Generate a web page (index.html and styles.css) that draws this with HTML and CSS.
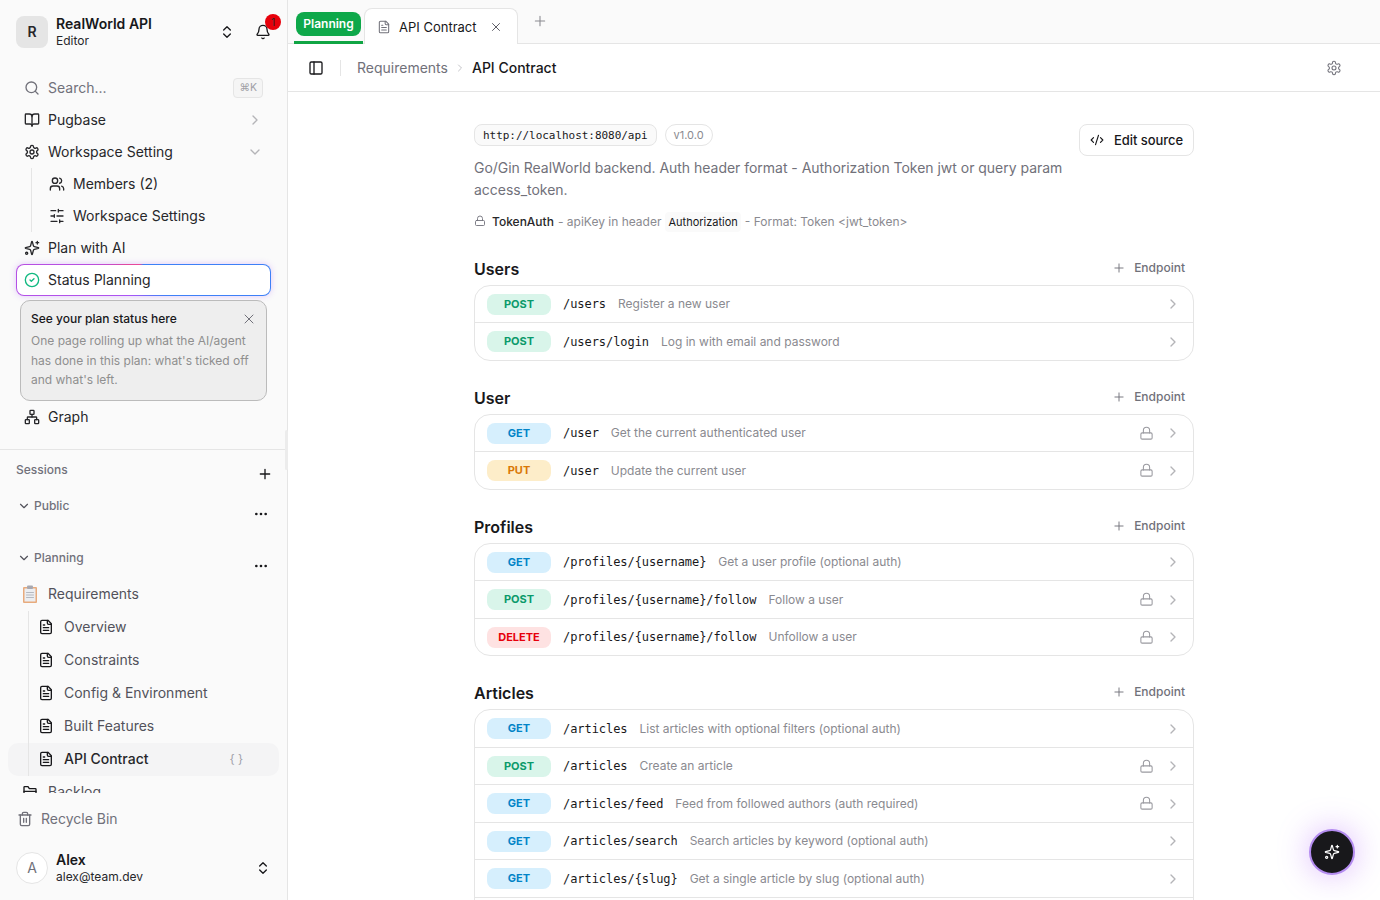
FILE: index.html
```html
<!DOCTYPE html>
<html lang="en">
<head>
<meta charset="utf-8">
<title>API Contract</title>
<link rel="stylesheet" href="styles.css">
</head>
<body>

<!-- icon sprite -->
<svg class="sprite" xmlns="http://www.w3.org/2000/svg">
    <symbol id="i-updown" viewBox="0 0 24 24"><path d="m7 15 5 5 5-5"/><path d="m7 9 5-5 5 5"/></symbol>
    <symbol id="i-bell" viewBox="0 0 24 24"><path d="M10.268 21a2 2 0 0 0 3.464 0"/><path d="M3.262 15.326A1 1 0 0 0 4 17h16a1 1 0 0 0 .74-1.673C19.41 13.956 18 12.499 18 8A6 6 0 0 0 6 8c0 4.499-1.411 5.956-2.738 7.326"/></symbol>
    <symbol id="i-search" viewBox="0 0 24 24"><circle cx="11" cy="11" r="8"/><path d="m21 21-4.3-4.3"/></symbol>
    <symbol id="i-book" viewBox="0 0 24 24"><path d="M12 7v14"/><path d="M3 18a1 1 0 0 1-1-1V4a1 1 0 0 1 1-1h5a4 4 0 0 1 4 4 4 4 0 0 1 4-4h5a1 1 0 0 1 1 1v13a1 1 0 0 1-1 1h-6a3 3 0 0 0-3 3 3 3 0 0 0-3-3z"/></symbol>
    <symbol id="i-gear" viewBox="0 0 24 24"><path d="M12.22 2h-.44a2 2 0 0 0-2 2v.18a2 2 0 0 1-1 1.73l-.43.25a2 2 0 0 1-2 0l-.15-.08a2 2 0 0 0-2.73.73l-.22.38a2 2 0 0 0 .73 2.73l.15.1a2 2 0 0 1 1 1.72v.51a2 2 0 0 1-1 1.74l-.15.09a2 2 0 0 0-.73 2.73l.22.38a2 2 0 0 0 2.73.73l.15-.08a2 2 0 0 1 2 0l.43.25a2 2 0 0 1 1 1.73V20a2 2 0 0 0 2 2h.44a2 2 0 0 0 2-2v-.18a2 2 0 0 1 1-1.73l.43-.25a2 2 0 0 1 2 0l.15.08a2 2 0 0 0 2.73-.73l.22-.39a2 2 0 0 0-.73-2.73l-.15-.08a2 2 0 0 1-1-1.74v-.5a2 2 0 0 1 1-1.74l.15-.09a2 2 0 0 0 .73-2.73l-.22-.38a2 2 0 0 0-2.73-.73l-.15.08a2 2 0 0 1-2 0l-.43-.25a2 2 0 0 1-1-1.73V4a2 2 0 0 0-2-2z"/><circle cx="12" cy="12" r="3"/></symbol>
    <symbol id="i-users" viewBox="0 0 24 24"><path d="M16 21v-2a4 4 0 0 0-4-4H6a4 4 0 0 0-4 4v2"/><circle cx="9" cy="7" r="4"/><path d="M22 21v-2a4 4 0 0 0-3-3.87"/><path d="M16 3.13a4 4 0 0 1 0 7.75"/></symbol>
    <symbol id="i-sliders" viewBox="0 0 24 24"><path d="M21 4h-7M10 4H3M21 12h-9M8 12H3M21 20h-5M12 20H3M14 2v4M8 10v4M16 18v4"/></symbol>
    <symbol id="i-sparkle" viewBox="0 0 24 24"><path d="M9.937 15.5A2 2 0 0 0 8.5 14.063l-6.135-1.582a.5.5 0 0 1 0-.962L8.5 9.936A2 2 0 0 0 9.937 8.5l1.582-6.135a.5.5 0 0 1 .963 0L14.063 8.5A2 2 0 0 0 15.5 9.937l6.135 1.581a.5.5 0 0 1 0 .964L15.5 14.063a2 2 0 0 0-1.437 1.437l-1.582 6.135a.5.5 0 0 1-.963 0z"/><path d="M20 2v4M22 4h-4"/><circle cx="4" cy="20" r="1.6"/></symbol>
    <symbol id="i-check" viewBox="0 0 24 24"><circle cx="12" cy="12" r="10"/><path d="m9 12 2 2 4-4"/></symbol>
    <symbol id="i-graph" viewBox="0 0 24 24"><rect x="16" y="16" width="6" height="6" rx="1"/><rect x="2" y="16" width="6" height="6" rx="1"/><rect x="9" y="2" width="6" height="6" rx="1"/><path d="M5 16v-3a1 1 0 0 1 1-1h12a1 1 0 0 1 1 1v3"/><path d="M12 12V8"/></symbol>
    <symbol id="i-file" viewBox="0 0 24 24"><path d="M15 2H6a2 2 0 0 0-2 2v16a2 2 0 0 0 2 2h12a2 2 0 0 0 2-2V7Z"/><path d="M14 2v4a2 2 0 0 0 2 2h4"/><path d="M10 9H8M16 13H8M16 17H8"/></symbol>
    <symbol id="i-trash" viewBox="0 0 24 24"><path d="M3 6h18"/><path d="M19 6v14c0 1-1 2-2 2H7c-1 0-2-1-2-2V6"/><path d="M8 6V4c0-1 1-2 2-2h4c1 0 2 1 2 2v2"/><path d="M10 11v6M14 11v6"/></symbol>
    <symbol id="i-folder" viewBox="0 0 24 24"><path d="M3 20V5a1 1 0 0 1 1-1h5l2 3h9a1 1 0 0 1 1 1v12"/><path d="M3 11h18"/></symbol>
    <symbol id="i-panel" viewBox="0 0 24 24"><rect x="3" y="3" width="18" height="18" rx="2"/><path d="M9 3v18"/></symbol>
    <symbol id="i-lock" viewBox="0 0 24 24"><rect x="3" y="11" width="18" height="10" rx="2"/><path d="M7 11V7a5 5 0 0 1 10 0v4"/></symbol>
    <symbol id="i-code" viewBox="0 0 24 24"><path d="m18 16 4-4-4-4"/><path d="m6 8-4 4 4 4"/><path d="m14.5 4-5 16"/></symbol>
    <symbol id="i-plus" viewBox="0 0 24 24"><path d="M5 12h14M12 5v14"/></symbol>
    <symbol id="i-x" viewBox="0 0 24 24"><path d="M18 6 6 18M6 6l12 12"/></symbol>
    <symbol id="i-right" viewBox="0 0 24 24"><path d="m9 18 6-6-6-6"/></symbol>
    <symbol id="i-down" viewBox="0 0 24 24"><path d="m6 9 6 6 6-6"/></symbol>
    <symbol id="i-dots" viewBox="0 0 24 24"><circle cx="5" cy="12" r="1"/><circle cx="12" cy="12" r="1"/><circle cx="19" cy="12" r="1"/></symbol>
</svg>

<div class="app">

    <aside class="sidebar">
        <div class="workspace">
            <div class="avatar avatar-square">R</div>
            <div class="who">
                <div class="who-name">RealWorld API</div>
                <div class="who-sub">Editor</div>
            </div>
            <svg class="ic ic-dark"><use href="#i-updown"/></svg>
            <div class="bell">
                <svg class="ic ic-dark ic-bell"><use href="#i-bell"/></svg>
                <span class="bell-badge">1</span>
            </div>
        </div>

        <nav class="nav">
            <div class="nav-item nav-search">
                <svg class="ic ic-gray"><use href="#i-search"/></svg>
                <span class="nav-label">Search...</span>
                <kbd class="kbd">⌘K</kbd>
            </div>
            <div class="nav-item">
                <svg class="ic"><use href="#i-book"/></svg>
                <span class="nav-label">Pugbase</span>
                <svg class="ic ic-light"><use href="#i-right"/></svg>
            </div>
            <div class="nav-item">
                <svg class="ic"><use href="#i-gear"/></svg>
                <span class="nav-label">Workspace Setting</span>
                <svg class="ic ic-light"><use href="#i-down"/></svg>
            </div>
            <div class="nav-sub">
                <div class="nav-item">
                    <svg class="ic"><use href="#i-users"/></svg>
                    <span class="nav-label">Members (2)</span>
                </div>
                <div class="nav-item">
                    <svg class="ic"><use href="#i-sliders"/></svg>
                    <span class="nav-label">Workspace Settings</span>
                </div>
            </div>
            <div class="nav-item">
                <svg class="ic"><use href="#i-sparkle"/></svg>
                <span class="nav-label">Plan with AI</span>
            </div>
            <div class="nav-item nav-status">
                <svg class="ic ic-green"><use href="#i-check"/></svg>
                <span class="nav-label">Status Planning</span>
            </div>
            <div class="hint">
                <div class="hint-head">
                    <span>See your plan status here</span>
                    <svg class="ic ic-hint"><use href="#i-x"/></svg>
                </div>
                <p>One page rolling up what the AI/agent has done in this plan: what's ticked off and what's left.</p>
            </div>
            <div class="nav-item">
                <svg class="ic"><use href="#i-graph"/></svg>
                <span class="nav-label">Graph</span>
            </div>
        </nav>

        <div class="sessions">
            <div class="sess-head">
                <span class="sess-title">Sessions</span>
                <svg class="ic ic-dark sess-plus"><use href="#i-plus"/></svg>
            </div>
            <div class="group group-public">
                <svg class="ic ic-group"><use href="#i-down"/></svg>
                <span class="group-name">Public</span>
                <svg class="ic ic-dark group-more"><use href="#i-dots"/></svg>
            </div>
            <div class="group group-planning">
                <svg class="ic ic-group"><use href="#i-down"/></svg>
                <span class="group-name">Planning</span>
                <svg class="ic ic-dark group-more"><use href="#i-dots"/></svg>
            </div>
            <div class="doc-parent">
                <svg class="ic clipboard" viewBox="0 0 16 18">
                    <rect class="cb-board" x="1" y="2" width="14" height="16" rx="1"/>
                    <rect class="cb-paper" x="2.5" y="3.5" width="11" height="13"/>
                    <rect class="cb-clip" x="5" y="0.5" width="6" height="3.5" rx="1"/>
                    <path class="cb-lines" d="M4.5 7.5h7M4.5 10h7M4.5 12.5h7"/>
                </svg>
                <span>Requirements</span>
            </div>
            <div class="tree">
                <div class="doc"><svg class="ic ic-dark"><use href="#i-file"/></svg><span>Overview</span></div>
                <div class="doc"><svg class="ic ic-dark"><use href="#i-file"/></svg><span>Constraints</span></div>
                <div class="doc"><svg class="ic ic-dark"><use href="#i-file"/></svg><span>Config &amp; Environment</span></div>
                <div class="doc"><svg class="ic ic-dark"><use href="#i-file"/></svg><span>Built Features</span></div>
                <div class="doc doc-active"><svg class="ic ic-dark"><use href="#i-file"/></svg><span>API Contract</span><em class="doc-tag">{ }</em></div>
            </div>
            <div class="doc-parent">
                <svg class="ic ic-dark"><use href="#i-folder"/></svg>
                <span>Backlog</span>
            </div>
        </div>

        <div class="recycle">
            <svg class="ic ic-gray"><use href="#i-trash"/></svg>
            <span>Recycle Bin</span>
        </div>

        <div class="account">
            <div class="avatar avatar-round">A</div>
            <div class="who">
                <div class="who-name">Alex</div>
                <div class="who-sub">alex@team.dev</div>
            </div>
            <svg class="ic ic-dark"><use href="#i-updown"/></svg>
        </div>

        <div class="side-thumb"></div>
    </aside>

    <main class="main">
        <div class="tabbar">
            <div class="tab-group"><span class="tab-pill">Planning</span></div>
            <div class="tab">
                <svg class="ic ic-tab"><use href="#i-file"/></svg>
                <span>API Contract</span>
                <svg class="ic ic-close"><use href="#i-x"/></svg>
            </div>
            <svg class="ic ic-gray tab-add"><use href="#i-plus"/></svg>
        </div>

        <div class="toolbar">
            <svg class="ic ic-dark"><use href="#i-panel"/></svg>
            <span class="tool-sep"></span>
            <span class="crumb">Requirements</span>
            <svg class="ic ic-crumb"><use href="#i-right"/></svg>
            <span class="crumb crumb-now">API Contract</span>
            <svg class="ic ic-gray tool-gear"><use href="#i-gear"/></svg>
        </div>

        <div class="content">
            <div class="doc-body">

                <div class="intro">
                    <div class="intro-text">
                        <div class="chips">
                            <code class="chip-url">http://localhost:8080/api</code>
                            <span class="chip-ver">v1.0.0</span>
                        </div>
                        <p class="intro-desc">Go/Gin RealWorld backend. Auth header format - Authorization Token jwt or query param access_token.</p>
                    </div>
                    <button class="btn-source">
                        <svg class="ic ic-dark"><use href="#i-code"/></svg>
                        Edit source
                    </button>
                </div>

                <div class="auth">
                    <svg class="ic ic-auth"><use href="#i-lock"/></svg>
                    <b>TokenAuth</b>
                    <span>- apiKey in header</span>
                    <code>Authorization</code>
                    <span>- Format: Token &lt;jwt_token&gt;</span>
                </div>

                <section class="api-section">
                    <div class="api-head">
                        <h2>Users</h2>
                        <span class="add-endpoint"><svg class="ic ic-gray"><use href="#i-plus"/></svg>Endpoint</span>
                    </div>
                    <div class="api-list">
                        <div class="api-row"><span class="method post">POST</span><code>/users</code><span class="api-desc">Register a new user</span><svg class="ic ic-light"><use href="#i-right"/></svg></div>
                        <div class="api-row"><span class="method post">POST</span><code>/users/login</code><span class="api-desc">Log in with email and password</span><svg class="ic ic-light"><use href="#i-right"/></svg></div>
                    </div>
                </section>

                <section class="api-section">
                    <div class="api-head">
                        <h2>User</h2>
                        <span class="add-endpoint"><svg class="ic ic-gray"><use href="#i-plus"/></svg>Endpoint</span>
                    </div>
                    <div class="api-list">
                        <div class="api-row"><span class="method get">GET</span><code>/user</code><span class="api-desc">Get the current authenticated user</span><svg class="ic ic-lock"><use href="#i-lock"/></svg><svg class="ic ic-light"><use href="#i-right"/></svg></div>
                        <div class="api-row"><span class="method put">PUT</span><code>/user</code><span class="api-desc">Update the current user</span><svg class="ic ic-lock"><use href="#i-lock"/></svg><svg class="ic ic-light"><use href="#i-right"/></svg></div>
                    </div>
                </section>

                <section class="api-section">
                    <div class="api-head">
                        <h2>Profiles</h2>
                        <span class="add-endpoint"><svg class="ic ic-gray"><use href="#i-plus"/></svg>Endpoint</span>
                    </div>
                    <div class="api-list">
                        <div class="api-row"><span class="method get">GET</span><code>/profiles/{username}</code><span class="api-desc">Get a user profile (optional auth)</span><svg class="ic ic-light"><use href="#i-right"/></svg></div>
                        <div class="api-row"><span class="method post">POST</span><code>/profiles/{username}/follow</code><span class="api-desc">Follow a user</span><svg class="ic ic-lock"><use href="#i-lock"/></svg><svg class="ic ic-light"><use href="#i-right"/></svg></div>
                        <div class="api-row"><span class="method delete">DELETE</span><code>/profiles/{username}/follow</code><span class="api-desc">Unfollow a user</span><svg class="ic ic-lock"><use href="#i-lock"/></svg><svg class="ic ic-light"><use href="#i-right"/></svg></div>
                    </div>
                </section>

                <section class="api-section">
                    <div class="api-head">
                        <h2>Articles</h2>
                        <span class="add-endpoint"><svg class="ic ic-gray"><use href="#i-plus"/></svg>Endpoint</span>
                    </div>
                    <div class="api-list">
                        <div class="api-row"><span class="method get">GET</span><code>/articles</code><span class="api-desc">List articles with optional filters (optional auth)</span><svg class="ic ic-light"><use href="#i-right"/></svg></div>
                        <div class="api-row"><span class="method post">POST</span><code>/articles</code><span class="api-desc">Create an article</span><svg class="ic ic-lock"><use href="#i-lock"/></svg><svg class="ic ic-light"><use href="#i-right"/></svg></div>
                        <div class="api-row"><span class="method get">GET</span><code>/articles/feed</code><span class="api-desc">Feed from followed authors (auth required)</span><svg class="ic ic-lock"><use href="#i-lock"/></svg><svg class="ic ic-light"><use href="#i-right"/></svg></div>
                        <div class="api-row"><span class="method get">GET</span><code>/articles/search</code><span class="api-desc">Search articles by keyword (optional auth)</span><svg class="ic ic-light"><use href="#i-right"/></svg></div>
                        <div class="api-row"><span class="method get">GET</span><code>/articles/{slug}</code><span class="api-desc">Get a single article by slug (optional auth)</span><svg class="ic ic-light"><use href="#i-right"/></svg></div>
                        <div class="api-row"></div>
                    </div>
                </section>

            </div>
        </div>
    </main>

</div>

<button class="fab"><svg class="ic ic-fab"><use href="#i-sparkle"/></svg></button>

</body>
</html>
```

FILE: styles.css
```css
* { box-sizing: border-box; }
html, body { height: 100%; margin: 0; }
body { font: 14px/20px Inter, "Noto Sans", sans-serif; color: #18181b; background: #fff; overflow: hidden; }
p, h2 { margin: 0; }
code, kbd { font-family: "DejaVu Sans Mono", monospace; }
.sprite { display: none; }

/* icons */
.ic { width: 16px; height: 16px; flex: none; fill: none; stroke: #27272a; stroke-width: 2; stroke-linecap: round; stroke-linejoin: round; }
.ic-dark { stroke: #18181b; }
.ic-gray { stroke: #71717a; }
.ic-light { stroke: #b4b4b8; }
.ic-green { stroke: #10b981; }
.ic-lock { width: 15px; height: 15px; stroke: #9a9aa0; stroke-width: 1.7; margin-right: 11px; }

.app { display: flex; height: 100vh; }

/* sidebar */
.sidebar { position: relative; width: 288px; flex: none; display: flex; flex-direction: column; background: #fafafa; border-right: 1px solid #e5e5e5; }
.side-thumb { position: absolute; right: -1px; top: 430px; width: 3px; height: 40px; background: #ececec; border-radius: 2px; }

.workspace { display: flex; align-items: center; padding: 16px; height: 64px; }
.avatar { width: 32px; height: 32px; flex: none; display: flex; align-items: center; justify-content: center; font-size: 14px; }
.avatar-square { background: #e5e5e5; border-radius: 8px; font-weight: 600; color: #27272a; }
.avatar-round { background: #fff; border: 1px solid #e5e5e5; border-radius: 50%; color: #71717a; }
.who { flex: 1; min-width: 0; height: 32px; margin-left: 8px; }
.who-name { font-weight: 600; font-size: 14px; line-height: 16px; color: #18181b; }
.who-sub { font-size: 12px; line-height: 16px; margin-top: 1px; color: #27272a; }
.bell { position: relative; margin-left: 20px; width: 16px; height: 16px; }
.ic-bell { display: block; }
.bell-badge { position: absolute; left: 10px; top: -10px; width: 16px; height: 16px; border-radius: 50%; background: #e7000b; color: #27272a; font-size: 10px; line-height: 16px; text-align: center; }

.nav { padding: 8px 16px 16px; border-bottom: 1px solid #e5e5e5; }
.nav-item { display: flex; align-items: center; gap: 8px; height: 32px; padding: 0 8px; color: #27272a; }
.nav-label { flex: 1; white-space: nowrap; }
.nav-search .nav-label { color: #71717a; }
.kbd { font: 10.5px/18px Inter, "DejaVu Sans", sans-serif; height: 20px; padding: 0 5px; color: #9f9fa5; background: #f5f5f5; border: 1px solid #e5e5e5; border-radius: 4px; }
.nav-sub { margin-left: 15px; padding-left: 9px; border-left: 1px solid #e5e5e5; }
.nav-status { border: 1px solid transparent; border-radius: 8px; padding-left: 7px; background: linear-gradient(#fff, #fff) padding-box, conic-gradient(#3b82f6 0deg, #3f80f7 120deg, #a855f7 220deg, #b94fe0 285deg, #e0489f 310deg, #ec4899 345deg, #3b82f6 360deg) border-box; box-shadow: 0 0 6px rgba(168, 85, 247, .3); }
.hint { margin: 4px 4px 0; padding: 8px 10px 10.5px; background: #eee; border: 1px solid #bbb; border-radius: 10px; }
.hint-head { display: flex; align-items: center; justify-content: space-between; font-size: 12px; font-weight: 500; line-height: 20px; color: #18181b; }
.ic-hint { stroke: #71717a; stroke-width: 1.5; margin-right: -1px; }
.hint p { font-size: 12px; line-height: 19.5px; color: #8f8f8f; margin-top: 2px; }

.sessions { flex: 1; min-height: 0; overflow: hidden; padding: 12px 8px 0; }
.sess-head { display: flex; justify-content: space-between; padding: 0 8px; height: 36px; }
.sess-title { font-size: 12px; font-weight: 500; line-height: 16px; color: #71717a; }
.sess-plus { margin-top: 4px; margin-right: -2px; }
.group { display: flex; padding: 0 10px 0 2px; height: 24px; font-size: 12px; font-weight: 500; line-height: 16px; color: #71717a; }
.group-planning { margin-top: 28px; }
.ic-group { width: 14px; height: 14px; margin: 1px 3px 0 7px; stroke: #52525b; }
.group-name { flex: 1; }
.group-more { margin-top: 8px; }
.doc-parent { display: flex; align-items: center; height: 32px; margin-top: 4px; padding-left: 14px; gap: 10px; color: #52525b; }
.doc-parent + .tree + .doc-parent { margin-top: 0; }
.clipboard { width: 16px; height: 18px; stroke: none; }
.cb-board { fill: #e8ab7d; }
.cb-paper { fill: #eceef1; }
.cb-clip { fill: #a8a8b0; }
.cb-lines { fill: none; stroke: #b6b9c0; stroke-width: 1; }
.tree { position: relative; margin-top: .5px; }
.tree::before { content: ""; position: absolute; left: 20px; top: 0; bottom: 0; width: 1px; background: #e5e5e5; }
.doc { display: flex; align-items: center; gap: 10px; height: 33px; padding-left: 30px; color: #52525b; border-radius: 10px; }
.doc-active { background: #f4f4f5; color: #27272a; font-weight: 500; }
.doc-tag { margin-left: auto; margin-right: 36px; font-style: normal; font-weight: 400; font-size: 12px; color: #a1a1aa; }

.recycle { display: flex; align-items: center; gap: 8px; height: 32px; margin-top: 10px; padding-left: 17px; color: #71717a; }
.account { display: flex; align-items: center; padding: 17px 16px 16px; }

/* tabs */
.main { flex: 1; min-width: 0; display: flex; flex-direction: column; }
.tabbar { display: flex; align-items: flex-end; height: 44px; padding-left: 6px; background: #fafafa; border-bottom: 1px solid #e5e5e5; flex: none; }
.tab-group { height: 32px; padding: 0 2px; border-bottom: 3px solid #10a544; margin-bottom: -1px; margin-right: 1px; }
.tab-pill { display: block; width: 65px; height: 24px; background: #0ea84a; color: #fff; font-size: 12px; font-weight: 600; line-height: 24px; text-align: center; border-radius: 8px; }
.tab { display: flex; align-items: center; height: 36px; padding: 0 14px 0 12px; margin-bottom: -1px; background: #fff; border: 1px solid #e5e5e5; border-bottom: 0; border-radius: 8px 8px 0 0; font-size: 13px; }
.ic-tab { width: 14px; height: 14px; stroke: #71717a; margin-right: 8px; stroke-width: 1.8; }
.ic-close { width: 14px; height: 14px; stroke: #52525b; margin-left: 12px; stroke-width: 1.6; }
.tab-add { align-self: flex-start; margin: 13px 0 0 14px; stroke: #8a8a90; stroke-width: 1.6; }

/* toolbar */
.toolbar { display: flex; align-items: center; height: 48px; flex: none; padding: 0 38px 0 20px; border-bottom: 1px solid #e5e5e5; }
.tool-sep { width: 1px; height: 16px; background: #e5e5e5; margin: 0 16px; }
.crumb { color: #71717a; }
.crumb-now { color: #18181b; font-weight: 500; }
.ic-crumb { width: 12px; height: 12px; stroke: #c4c4c8; margin: 0 6px; }
.tool-gear { margin-left: auto; stroke-width: 1.6; }

/* document */
.content { flex: 1; min-height: 0; overflow: hidden; padding-top: 32px; }
.doc-body { width: 720px; margin: 0 auto; }
.intro { display: flex; justify-content: space-between; align-items: flex-start; }
.intro-text { width: 600px; }
.chips { display: flex; align-items: center; gap: 8px; height: 22px; }
.chip-url { height: 22px; font-size: 11px; line-height: 21px; letter-spacing: -.04px; padding: 0 8px; color: #18181b; background: #fafafa; border: 1px solid #e5e5e5; border-radius: 8px; }
.chip-ver { height: 22px; font-size: 11px; line-height: 20px; padding: 0 8px; color: #8a8a90; border: 1px solid #e5e5e5; border-radius: 11px; }
.intro-desc { margin-top: 11px; line-height: 22px; letter-spacing: -.025px; color: #71717a; }
.btn-source { display: flex; align-items: center; gap: 10px; height: 32px; padding: 0 10px; background: #fff; border: 1px solid #e5e5e5; border-radius: 8px; font: 500 13px/20px Inter, sans-serif; letter-spacing: -.05px; color: #18181b; }
.btn-source .ic { width: 14px; height: 14px; }

.auth { display: flex; align-items: center; height: 20px; margin-top: 11px; font-size: 12px; color: #8a8a90; gap: 4px; }
.ic-auth { width: 12px; height: 12px; stroke: #71717a; margin-right: 2px; margin-top: -3px; stroke-width: 1.8; }
.auth b { font-weight: 500; color: #27272a; }
.auth code { font: 11px/20px Inter, sans-serif; padding: 0 3px; color: #18181b; background: #fafafa; border-radius: 4px; }

.api-section { margin-bottom: 26px; }
.auth + .api-section { margin-top: 25.75px; }
.api-head { display: flex; justify-content: space-between; align-items: center; height: 22px; margin-bottom: 5px; }
.api-head h2 { font-size: 16px; font-weight: 600; line-height: 22px; color: #18181b; }
.add-endpoint { display: flex; align-items: center; gap: 8px; padding-right: 9px; font-size: 12px; font-weight: 500; color: #71717a; margin-top: -2px; }
.add-endpoint .ic { width: 14px; height: 14px; stroke-width: 1.6; }
.api-list { border: 1px solid #e5e5e5; border-radius: 16px; overflow: hidden; }
.api-row { display: flex; align-items: center; height: 37.5px; padding: 0 12px; border-bottom: 1px solid #e5e5e5; }
.api-row:last-child { height: 36.5px; border-bottom: 0; }
.method { width: 64px; height: 21px; flex: none; border-radius: 8px; text-align: center; font-size: 11px; font-weight: 700; line-height: 21px; }
.post { background: #d9f5ea; color: #0b9a6b; }
.get { background: #d6effd; color: #0284c7; }
.put { background: #fdedc9; color: #d97706; }
.delete { background: #fee2e2; color: #e7000b; }
.api-row code { margin-left: 12px; font-size: 12px; letter-spacing: -.06px; color: #18181b; }
.api-desc { flex: 1; margin-left: 12px; font-size: 12px; color: #8a8a90; }

.fab { position: fixed; left: 1309px; top: 829px; width: 46px; height: 46px; display: flex; align-items: center; justify-content: center; padding: 0; background: #18181b; border: 2px solid #b48cf0; border-radius: 50%; box-shadow: 0 0 32px rgba(168, 85, 247, .4); }
.ic-fab { stroke: #fff; stroke-width: 1.8; }
```
